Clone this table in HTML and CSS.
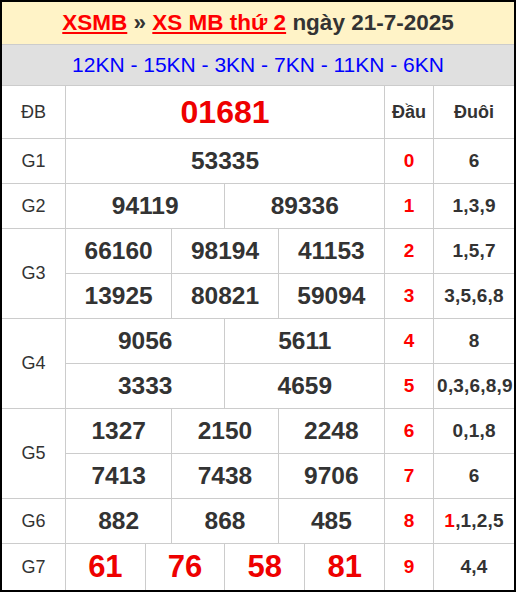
FILE: index.html
```html
<!DOCTYPE html>
<html lang="vi">
<head>
<meta charset="utf-8">
<title>XSMB thứ 2 ngày 21-7-2025</title>
<link rel="stylesheet" href="styles.css">
</head>
<body>
<div class="board">
  <div class="title">
    <a class="lnk" href="#">XSMB</a> » <a class="lnk" href="#">XS MB thứ 2</a> ngày 21-7-2025
  </div>
  <div class="codes">12KN - 15KN - 3KN - 7KN - 11KN - 6KN</div>
  <table class="results">
    <colgroup>
      <col class="c-label">
      <col class="c-n"><col class="c-n"><col class="c-n"><col class="c-n">
      <col class="c-n"><col class="c-n"><col class="c-n"><col class="c-n">
      <col class="c-n"><col class="c-n"><col class="c-n"><col class="c-n">
      <col class="c-dau">
      <col class="c-duoi">
    </colgroup>
    <tbody>
      <tr class="row-db">
        <td class="lbl">ĐB</td>
        <td class="num special" colspan="12">01681</td>
        <td class="head">Đầu</td>
        <td class="head">Đuôi</td>
      </tr>
      <tr>
        <td class="lbl">G1</td>
        <td class="num" colspan="12">53335</td>
        <td class="dau">0</td>
        <td class="duoi">6</td>
      </tr>
      <tr>
        <td class="lbl">G2</td>
        <td class="num" colspan="6">94119</td>
        <td class="num" colspan="6">89336</td>
        <td class="dau">1</td>
        <td class="duoi">1,3,9</td>
      </tr>
      <tr>
        <td class="lbl" rowspan="2">G3</td>
        <td class="num" colspan="4">66160</td>
        <td class="num" colspan="4">98194</td>
        <td class="num" colspan="4">41153</td>
        <td class="dau">2</td>
        <td class="duoi">1,5,7</td>
      </tr>
      <tr>
        <td class="num" colspan="4">13925</td>
        <td class="num" colspan="4">80821</td>
        <td class="num" colspan="4">59094</td>
        <td class="dau">3</td>
        <td class="duoi">3,5,6,8</td>
      </tr>
      <tr>
        <td class="lbl" rowspan="2">G4</td>
        <td class="num" colspan="6">9056</td>
        <td class="num" colspan="6">5611</td>
        <td class="dau">4</td>
        <td class="duoi">8</td>
      </tr>
      <tr>
        <td class="num" colspan="6">3333</td>
        <td class="num" colspan="6">4659</td>
        <td class="dau">5</td>
        <td class="duoi">0,3,6,8,9</td>
      </tr>
      <tr>
        <td class="lbl" rowspan="2">G5</td>
        <td class="num" colspan="4">1327</td>
        <td class="num" colspan="4">2150</td>
        <td class="num" colspan="4">2248</td>
        <td class="dau">6</td>
        <td class="duoi">0,1,8</td>
      </tr>
      <tr>
        <td class="num" colspan="4">7413</td>
        <td class="num" colspan="4">7438</td>
        <td class="num" colspan="4">9706</td>
        <td class="dau">7</td>
        <td class="duoi">6</td>
      </tr>
      <tr>
        <td class="lbl">G6</td>
        <td class="num" colspan="4">882</td>
        <td class="num" colspan="4">868</td>
        <td class="num" colspan="4">485</td>
        <td class="dau">8</td>
        <td class="duoi"><span class="hit">1</span>,1,2,5</td>
      </tr>
      <tr class="row-g7">
        <td class="lbl">G7</td>
        <td class="num g7" colspan="3">61</td>
        <td class="num g7" colspan="3">76</td>
        <td class="num g7" colspan="3">58</td>
        <td class="num g7" colspan="3">81</td>
        <td class="dau">9</td>
        <td class="duoi">4,4</td>
      </tr>
    </tbody>
  </table>
</div>
</body>
</html>
```

FILE: styles.css
```css
html, body {
  margin: 0;
  padding: 0;
  background: #fff;
}

body {
  font-family: "Liberation Sans", Arial, sans-serif;
  color: #333;
}

.board {
  width: 516px;
  height: 592px;
  box-sizing: border-box;
  border: 2px solid #000;
  overflow: hidden;
  display: flex;
  flex-direction: column;
}

.title {
  height: 42px;
  line-height: 42px;
  background: #fff3c7;
  border-bottom: 1px solid #ccc;
  text-align: center;
  font-weight: bold;
  font-size: 22.5px;
  color: #333;
  white-space: nowrap;
}

.lnk {
  color: #f00;
  text-decoration: underline;
  text-decoration-thickness: 2px;
  text-underline-offset: 2px;
}

.codes {
  height: 40px;
  line-height: 40px;
  background: #e0e0e0;
  border-bottom: 1px solid #ccc;
  text-align: center;
  font-size: 21px;
  color: #00f;
  white-space: nowrap;
}

.results {
  width: 512px;
  table-layout: fixed;
  border-collapse: collapse;
  border: hidden;
}

.c-label { width: 63.5px; }
.c-n { width: 26.583px; }
.c-dau { width: 49px; }
.c-duoi { width: 80.5px; }

.results td {
  border: 1px solid #ccc;
  padding: 0 3px;
  text-align: center;
  vertical-align: middle;
  white-space: nowrap;
  height: 44px;
}

.results .row-db td { height: 52px; }
.results .row-g7 td { height: 46px; }

.lbl {
  font-size: 18px;
  color: #333;
}

.num {
  font-size: 24.5px;
  font-weight: bold;
  color: #333;
}

.num.special {
  font-size: 32px;
  color: #e00;
}

.num.g7 {
  font-size: 31px;
  color: #e00;
}

.head {
  font-size: 18px;
  font-weight: bold;
  color: #333;
}

.dau {
  font-size: 19px;
  font-weight: bold;
  color: #f00;
}

.duoi {
  font-size: 19px;
  font-weight: bold;
  color: #333;
  letter-spacing: 0.2px;
}

.hit {
  color: #f00;
}
```
